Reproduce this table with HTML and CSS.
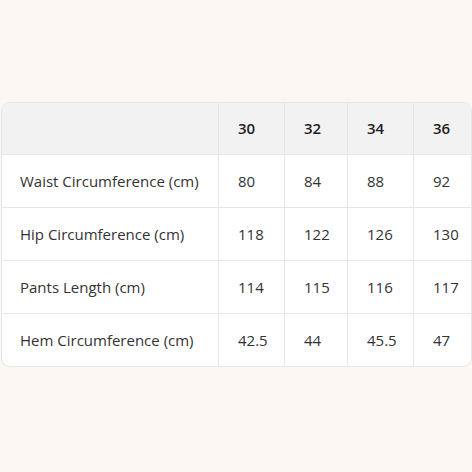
FILE: index.html
```html
<!DOCTYPE html>
<html>
<head>
<meta charset="utf-8">
<link rel="stylesheet" href="styles.css">
</head>
<body>
<div class="page">
  <div class="table-wrap">
    <table class="size-table">
      <colgroup>
        <col class="c-label">
        <col class="c-30">
        <col class="c-32">
        <col class="c-34">
        <col class="c-36">
      </colgroup>
      <thead>
        <tr><th></th><th>30</th><th>32</th><th>34</th><th>36</th></tr>
      </thead>
      <tbody>
        <tr><td>Waist Circumference (cm)</td><td>80</td><td>84</td><td>88</td><td>92</td></tr>
        <tr><td>Hip Circumference (cm)</td><td>118</td><td>122</td><td>126</td><td>130</td></tr>
        <tr><td>Pants Length (cm)</td><td>114</td><td>115</td><td>116</td><td>117</td></tr>
        <tr><td>Hem Circumference (cm)</td><td>42.5</td><td>44</td><td>45.5</td><td>47</td></tr>
      </tbody>
    </table>
  </div>
</div>
</body>
</html>
```
FILE: styles.css
```css
html, body {
  margin: 0;
  padding: 0;
  background: #fcf7f3;
}
body {
  font-family: "Open Sans", "Noto Sans", sans-serif;
  color: #333;
}
.page {
  padding: 102px 0 0 1px;
}
.table-wrap {
  border: 1px solid #e6e6e6;
  border-radius: 9px;
  overflow: hidden;
  background: #fff;
}
.size-table {
  width: 100%;
  border-collapse: separate;
  border-spacing: 0;
  table-layout: fixed;
  font-size: 15px;
}
.c-label { width: 216px; }
.c-30 { width: 66px; }
.c-32 { width: 63px; }
.c-34 { width: 66px; }
.c-36 { width: auto; }
.size-table th,
.size-table td {
  text-align: left;
  padding: 15px 18px 15px 19px;
  line-height: 22px;
  border-left: 1px solid #e6e6e6;
  border-top: 1px solid #e6e6e6;
  white-space: nowrap;
}
.size-table td:first-child {
  padding-left: 18px;
}
.size-table th:first-child,
.size-table td:first-child {
  border-left: none;
}
.size-table thead th {
  border-top: none;
  background: #f2f2f2;
  font-weight: 600;
  color: #1f1f1f;
  line-height: 21px;
}
```
